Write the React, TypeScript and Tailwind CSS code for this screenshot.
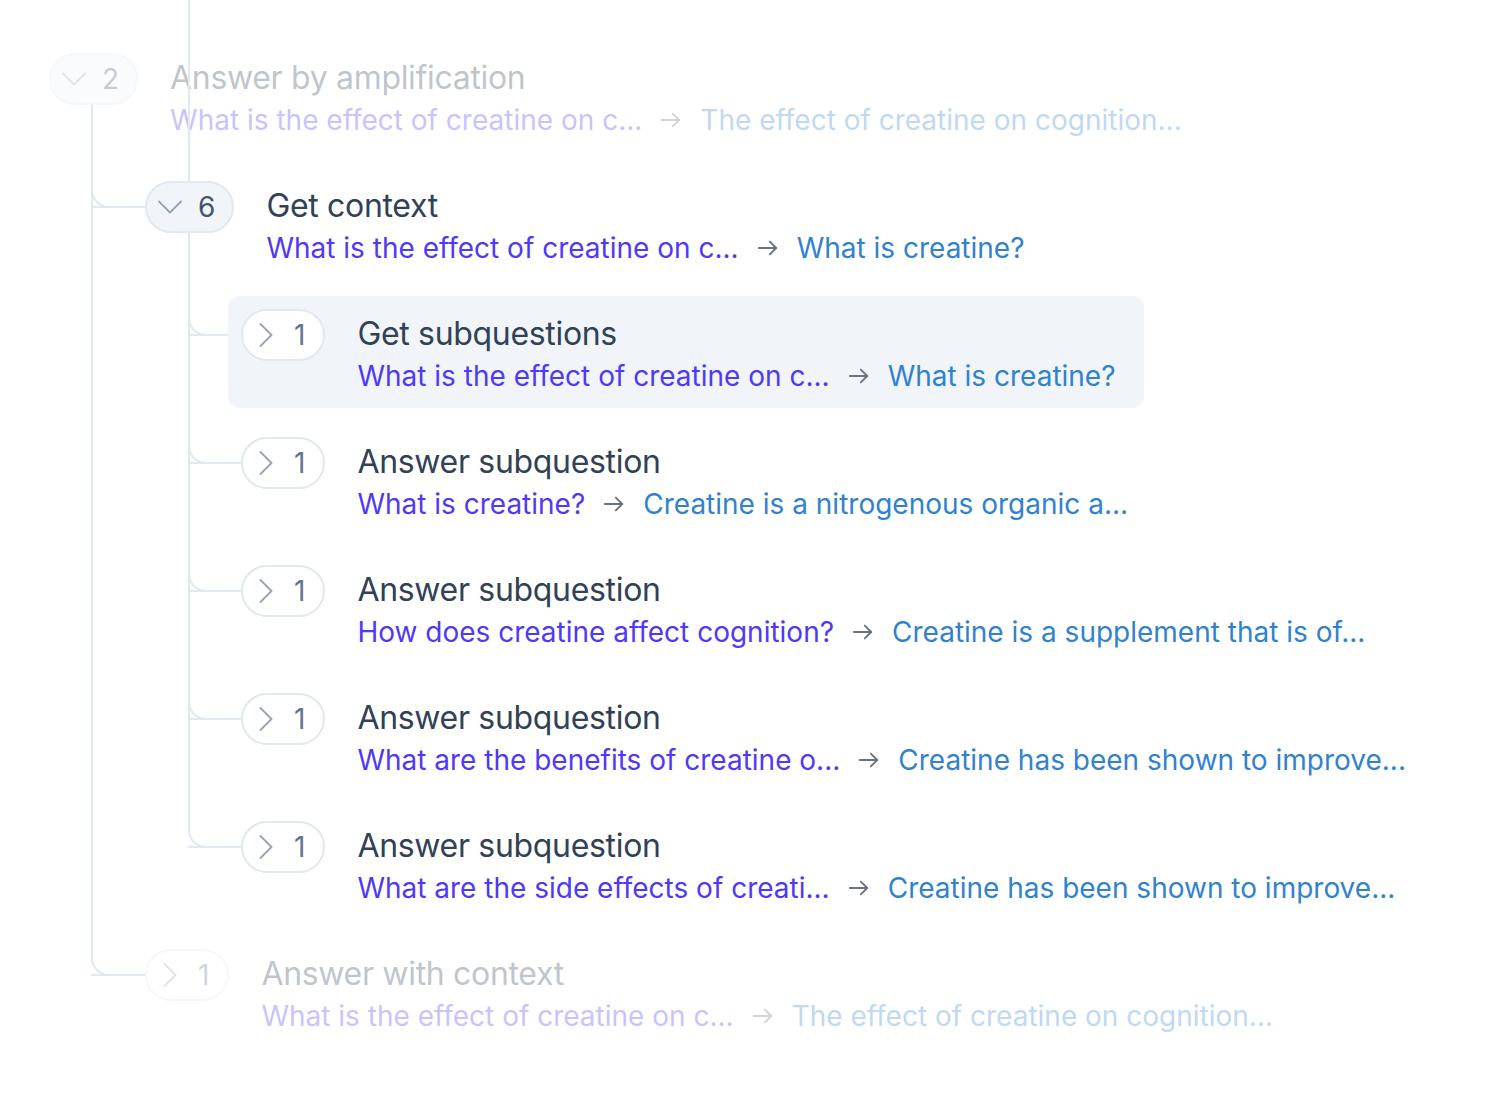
import React from 'react';

type Node = {
  count: number;
  title: string;
  question: string;
  answer: string;
  open?: boolean;
  faded?: boolean;
  selected?: boolean;
};

const Chevron = ({ open }: { open?: boolean }) => (
  <svg width="24" height="24" viewBox="0 0 24 24" fill="none" stroke="#94a3b8" strokeWidth="1.8" strokeLinecap="round" strokeLinejoin="round">
    {open ? <path d="M1 6.5l11 11 11-11" /> : <path d="M6.5 1l11 11-11 11" />}
  </svg>
);

const Arrow = () => (
  <svg width="22" height="22" viewBox="0 0 24 24" fill="none" stroke="#6b7280" strokeWidth="2" strokeLinecap="round" strokeLinejoin="round">
    <path d="M2 12h19" />
    <path d="M14 5l7 7-7 7" />
  </svg>
);

const Pill = ({ count, open }: { count: number; open?: boolean }) => (
  <div
    className={
      open
        ? 'relative z-10 flex h-[52px] shrink-0 items-center gap-[16px] rounded-full border-2 border-slate-200 bg-slate-100 pl-[11px] pr-[17px]'
        : 'relative z-10 flex h-[52px] shrink-0 items-center gap-[16px] rounded-full border-2 border-slate-200 bg-white pl-[11px] pr-[18px]'
    }
  >
    <Chevron open={open} />
    <span className={open ? 'text-[28px] leading-none text-slate-600' : 'text-[28px] leading-none text-slate-500'}>{count}</span>
  </div>
);

const Row = ({ node }: { node: Node }) => (
  <div
    className={
      'relative flex w-fit items-start gap-[32px] rounded-xl py-3 pl-[13px] pr-[28px] ' +
      (node.selected ? 'bg-slate-100 ' : '') +
      (node.faded ? 'opacity-30' : '')
    }
  >
    <div className="pt-px">
      <Pill count={node.count} open={node.open} />
    </div>
    <div className="flex flex-col whitespace-nowrap">
      <div className="h-[48px] text-[32px] leading-[52px] tracking-[-0.01em] text-slate-700">{node.title}</div>
      <div className="flex items-center gap-[18px] text-[28px] leading-[40px]">
        <span className="text-indigo-600">{node.question}</span>
        <Arrow />
        <span className="text-[#3182ce]">{node.answer}</span>
      </div>
    </div>
  </div>
);

// elbow from a trunk into the pill of the row
const Elbow = ({ level }: { level: 1 | 2 }) =>
  level === 1 ? (
    <>
      <div className="absolute left-[-41px] top-[20px] h-[20px] w-[30px] rounded-bl-[18px] border-b-2 border-l-2 border-slate-200" />
      <div className="absolute left-[-41px] top-[38px] h-[2px] w-[54px] bg-slate-200" />
    </>
  ) : (
    <>
      <div className="absolute left-[-40px] top-[20px] h-[20px] w-[30px] rounded-bl-[18px] border-b-2 border-l-2 border-slate-200" />
      <div className="absolute left-[-40px] top-[38px] h-[2px] w-[53px] bg-slate-200" />
    </>
  );

const children: Node[] = [
  {
    count: 1,
    title: 'Get subquestions',
    question: 'What is the effect of creatine on c...',
    answer: 'What is creatine?',
    selected: true,
  },
  {
    count: 1,
    title: 'Answer subquestion',
    question: 'What is creatine?',
    answer: 'Creatine is a nitrogenous organic a...',
  },
  {
    count: 1,
    title: 'Answer subquestion',
    question: 'How does creatine affect cognition?',
    answer: 'Creatine is a supplement that is of...',
  },
  {
    count: 1,
    title: 'Answer subquestion',
    question: 'What are the benefits of creatine o...',
    answer: 'Creatine has been shown to improve...',
  },
  {
    count: 1,
    title: 'Answer subquestion',
    question: 'What are the side effects of creati...',
    answer: 'Creatine has been shown to improve...',
  },
];

export default function App() {
  return (
    <div className="min-h-screen bg-white pl-9 pt-10" style={{ fontFamily: 'Inter, "Noto Sans", sans-serif' }}>
      <div className="relative flex flex-col gap-4">
        {/* trunk under "Answer by amplification" */}
        <div className="absolute left-[55px] top-[65px] h-[851px] w-[2px] bg-slate-200" />

        <Row
          node={{
            count: 2,
            title: 'Answer by amplification',
            question: 'What is the effect of creatine on c...',
            answer: 'The effect of creatine on cognition...',
            open: true,
            faded: true,
          }}
        />

        <div className="relative ml-24">
          <Elbow level={1} />
          <Row
            node={{
              count: 6,
              title: 'Get context',
              question: 'What is the effect of creatine on c...',
              answer: 'What is creatine?',
              open: true,
            }}
          />
        </div>

        <div className="relative ml-48 flex flex-col gap-4">
          {/* trunk for the children of "Get context" */}
          <div className="absolute left-[-40px] top-[-296px] h-[830px] w-[2px] bg-slate-200" />
          {children.map((c, i) => (
            <div key={i} className="relative">
              <Elbow level={2} />
              <Row node={c} />
            </div>
          ))}
        </div>

        <div className="relative ml-24">
          <Elbow level={1} />
          <Row
            node={{
              count: 1,
              title: 'Answer with context',
              question: 'What is the effect of creatine on c...',
              answer: 'The effect of creatine on cognition...',
              faded: true,
            }}
          />
        </div>
      </div>
    </div>
  );
}
